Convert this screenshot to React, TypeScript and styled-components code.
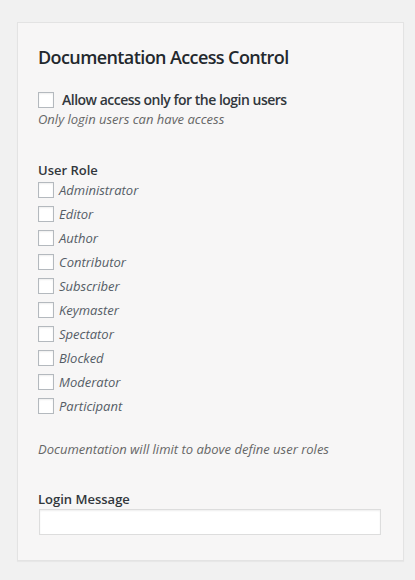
import React from 'react';
import styled, { createGlobalStyle } from 'styled-components';

const GlobalStyle = createGlobalStyle`
  html, body {
    margin: 0;
    padding: 0;
    background: #f1f1f1;
    font-family: "Open Sans", "Noto Sans", sans-serif;
    color: #444;
  }
`;

const Page = styled.div`
  padding: 22px 11px 18px 17px;
`;

const Panel = styled.div`
  background: #f7f6f6;
  border: 1px solid #e3e3e3;
  box-shadow: 0 1px 1px rgba(0, 0, 0, 0.04);
  padding: 20px 22px 25px 20px;
  display: flex;
  flex-direction: column;
`;

const Title = styled.h2`
  margin: 0 0 19px;
  font-size: 18px;
  font-weight: 600;
  letter-spacing: -0.6px;
  line-height: 28px;
  color: #23282d;
`;

const Check = styled.input.attrs({ type: 'checkbox' })`
  appearance: none;
  margin: 0;
  width: 16px;
  height: 16px;
  border: 1px solid #b4b9be;
  background: #fff;
  box-shadow: inset 0 1px 2px rgba(0, 0, 0, 0.07);
  flex: none;
`;

const MainOption = styled.label`
  display: flex;
  align-items: center;
  gap: 8px;
  font-size: 14px;
  font-weight: 600;
  letter-spacing: -0.5px;
  line-height: 20px;
  color: #32373c;
`;

const Hint = styled.p<{ $gap?: number }>`
  margin: 0;
  margin-top: ${(p) => p.$gap ?? 0}px;
  font-size: 13px;
  font-style: italic;
  line-height: 18px;
  color: #666;
`;

const FieldLabel = styled.div<{ $gap: number }>`
  margin-top: ${(p) => p.$gap}px;
  font-size: 13px;
  font-weight: 600;
  line-height: 18px;
  color: #32373c;
`;

const RoleList = styled.div`
  display: flex;
  flex-direction: column;
  margin-top: -1px;
`;

const RoleRow = styled.label`
  display: flex;
  align-items: center;
  gap: 5px;
  height: 24px;
  font-size: 13px;
  font-style: italic;
  color: #555d66;
`;

const TextInput = styled.input`
  margin: 1px 0 0 1px;
  height: 26px;
  box-sizing: border-box;
  width: 342px;
  border: 1px solid #ddd;
  background: #fff;
  box-shadow: inset 0 1px 2px rgba(0, 0, 0, 0.07);
`;

const roles = [
  'Administrator',
  'Editor',
  'Author',
  'Contributor',
  'Subscriber',
  'Keymaster',
  'Spectator',
  'Blocked',
  'Moderator',
  'Participant',
];

export default function App() {
  return (
    <>
      <GlobalStyle />
      <Page>
        <Panel>
          <Title>Documentation Access Control</Title>
          <MainOption>
            <Check />
            Allow access only for the login users
          </MainOption>
          <Hint>Only login users can have access</Hint>
          <FieldLabel $gap={33}>User Role</FieldLabel>
          <RoleList>
            {roles.map((r) => (
              <RoleRow key={r}>
                <Check />
                {r}
              </RoleRow>
            ))}
          </RoleList>
          <Hint $gap={22}>Documentation will limit to above define user roles</Hint>
          <FieldLabel $gap={32}>Login Message</FieldLabel>
          <TextInput />
        </Panel>
      </Page>
    </>
  );
}
